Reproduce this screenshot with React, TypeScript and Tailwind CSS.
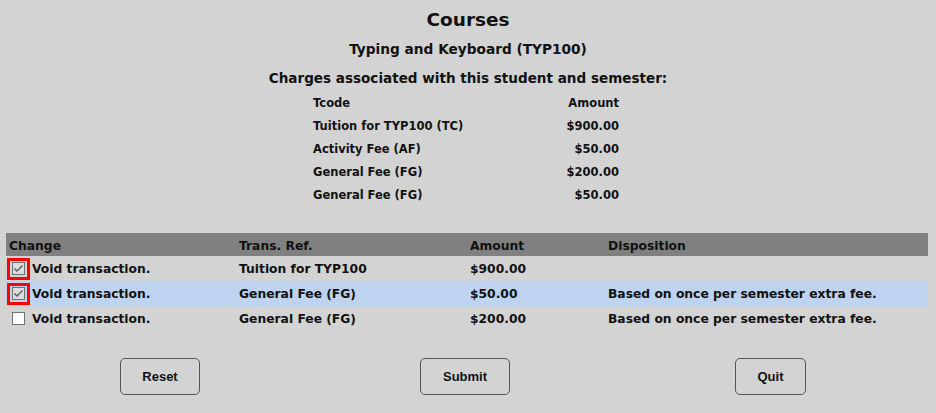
import React from "react";

const F = { fontFamily: '"DejaVu Sans", sans-serif' } as React.CSSProperties;

function Check({ checked, flagged }: { checked: boolean; flagged?: boolean }) {
  const box = (
    <div
      className={`w-[13px] h-[13px] border border-[#707070] flex items-center justify-center ${
        checked ? "bg-[#dcdcdc]" : "bg-white"
      }`}
    >
      {checked && (
        <svg width="11" height="11" viewBox="0 0 11 11">
          <path d="M1.5 5.5 L4 8 L9.5 2.5" stroke="#5a5a5a" strokeWidth="1.4" fill="none" />
        </svg>
      )}
    </div>
  );
  if (flagged)
    return (
      <div className="w-[23px] h-[22px] border-[3px] border-[#ff0000] flex items-center justify-center ml-[1px]">
        {box}
      </div>
    );
  return <div className="w-[23px] h-[22px] flex items-center justify-center ml-[1px]">{box}</div>;
}

export default function App() {
  const charges = [
    ["Tcode", "Amount"],
    ["Tuition for TYP100 (TC)", "$900.00"],
    ["Activity Fee (AF)", "$50.00"],
    ["General Fee (FG)", "$200.00"],
    ["General Fee (FG)", "$50.00"],
  ];
  const rows = [
    { c: true, ref: "Tuition for TYP100", amt: "$900.00", disp: "", hl: false },
    { c: true, ref: "General Fee (FG)", amt: "$50.00", disp: "Based on once per semester extra fee.", hl: true },
    { c: false, ref: "General Fee (FG)", amt: "$200.00", disp: "Based on once per semester extra fee.", hl: false },
  ];
  return (
    <div className="w-[936px] h-[413px] bg-[#d3d3d3] text-[#111] overflow-hidden pt-[7px]" style={F}>
      <div className="h-[24px] pt-[2px] flex items-center justify-center text-[18.5px] font-bold">Courses</div>
      <div className="mt-[7px] h-[20px] pt-[2px] flex items-center justify-center text-[13.7px] font-bold">
        Typing and Keyboard (TYP100)
      </div>
      <div className="mt-[9px] h-[20px] pt-[2px] flex items-center justify-center text-[13.55px] font-bold">
        Charges associated with this student and semester:
      </div>
      <div className="mt-[4px] w-[306px] ml-[313px] text-[11.5px] font-bold">
        {charges.map(([a, b], i) => (
          <div key={i} className="h-[23px] pt-[2px] flex items-center justify-between">
            <span>{a}</span>
            <span>{b}</span>
          </div>
        ))}
      </div>
      <div className="mt-[27px] ml-[6px] w-[922px] text-[12.3px] font-bold">
        <div className="h-[23px] pt-[3px] bg-[#808080] grid grid-cols-[233px_231px_138px_1fr] items-center">
          <span className="pl-[3px]">Change</span>
          <span>Trans. Ref.</span>
          <span>Amount</span>
          <span>Disposition</span>
        </div>
        {rows.map((r, i) => (
          <div
            key={i}
            className={`h-[25px] grid grid-cols-[233px_231px_138px_1fr] items-center ${r.hl ? "bg-[#bdd3ef]" : ""}`}
          >
            <span className="flex items-center gap-[2px]">
              <Check checked={r.c} flagged={r.c} />
              <span className="pt-[2px]">Void transaction.</span>
            </span>
            <span className="pt-[2px]">{r.ref}</span>
            <span className="pt-[2px]">{r.amt}</span>
            <span className="pt-[2px]">{r.disp}</span>
          </div>
        ))}
      </div>
      <div className="mt-[27px] flex items-start" style={{ fontFamily: '"Liberation Sans", Arial, sans-serif' }}>
        <button className="ml-[120px] w-[80px] h-[37px] shrink-0 border border-[#555] rounded-[5px] text-[13px] font-bold text-[#111] bg-transparent">
          Reset
        </button>
        <button className="ml-[220px] w-[90px] h-[37px] shrink-0 border border-[#555] rounded-[5px] text-[13px] font-bold text-[#111] bg-transparent">
          Submit
        </button>
        <button className="ml-[225px] w-[71px] h-[37px] shrink-0 border border-[#555] rounded-[5px] text-[13px] font-bold text-[#111] bg-transparent">
          Quit
        </button>
      </div>
    </div>
  );
}
